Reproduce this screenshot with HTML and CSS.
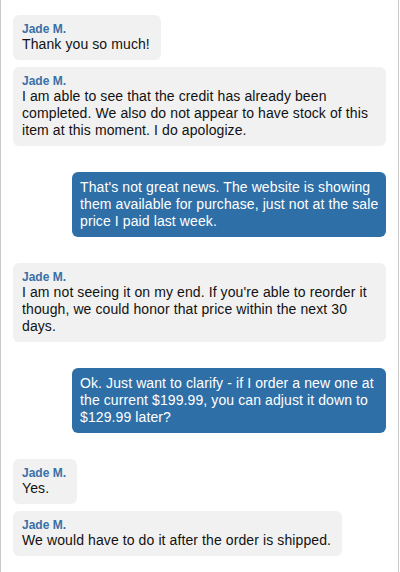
FILE: index.html
```html
<!DOCTYPE html>
<html>
<head>
<meta charset="utf-8">
<link rel="stylesheet" href="styles.css">
</head>
<body>
<div class="chat">
  <div class="group">
    <div class="msg agent"><div class="name">Jade M.</div><div class="text">Thank you so much!</div></div>
    <div class="msg agent"><div class="name">Jade M.</div><div class="text">I am able to see that the credit has already been completed. We also do not appear to have stock of this item at this moment. I do apologize.</div></div>
  </div>
  <div class="group">
    <div class="msg user"><div class="text">That's not great news. The website is showing them available for purchase, just not at the sale price I paid last week.</div></div>
  </div>
  <div class="group">
    <div class="msg agent"><div class="name">Jade M.</div><div class="text">I am not seeing it on my end. If you're able to reorder it though, we could honor that price within the next 30 days.</div></div>
  </div>
  <div class="group">
    <div class="msg user"><div class="text">Ok. Just want to clarify - if I order a new one at the current $199.99, you can adjust it down to $129.99 later?</div></div>
  </div>
  <div class="group">
    <div class="msg agent"><div class="name">Jade M.</div><div class="text">Yes.</div></div>
    <div class="msg agent"><div class="name">Jade M.</div><div class="text">We would have to do it after the order is shipped.</div></div>
  </div>
</div>
</body>
</html>
```
FILE: styles.css
```css
html, body {
  margin: 0;
  padding: 0;
  background: #ffffff;
}
body {
  font-family: "Liberation Sans", Arial, sans-serif;
  font-size: 14px;
  color: #111111;
}
.chat {
  box-sizing: border-box;
  width: 399px;
  height: 572px;
  border-left: 1px solid #c8c8c8;
  border-right: 1px solid #c8c8c8;
  padding: 15px 12px 0 12px;
  display: flex;
  flex-direction: column;
  gap: 26px;
  overflow: hidden;
}
.group {
  display: flex;
  flex-direction: column;
  gap: 7px;
}
.msg {
  border-radius: 6px;
  box-sizing: border-box;
}
.agent {
  align-self: flex-start;
  background: #f1f1f1;
  padding: 7px 11px 7px 9px;
  max-width: 100%;
}
.user {
  align-self: flex-end;
  background: #2e6fa7;
  color: #ffffff;
  width: 314px;
  padding: 7px 5px 7px 8px;
}
.name {
  font-size: 12px;
  font-weight: bold;
  line-height: 14px;
  color: #3a70a6;
}
.text {
  line-height: 17px;
  letter-spacing: 0.1px;
}
```
